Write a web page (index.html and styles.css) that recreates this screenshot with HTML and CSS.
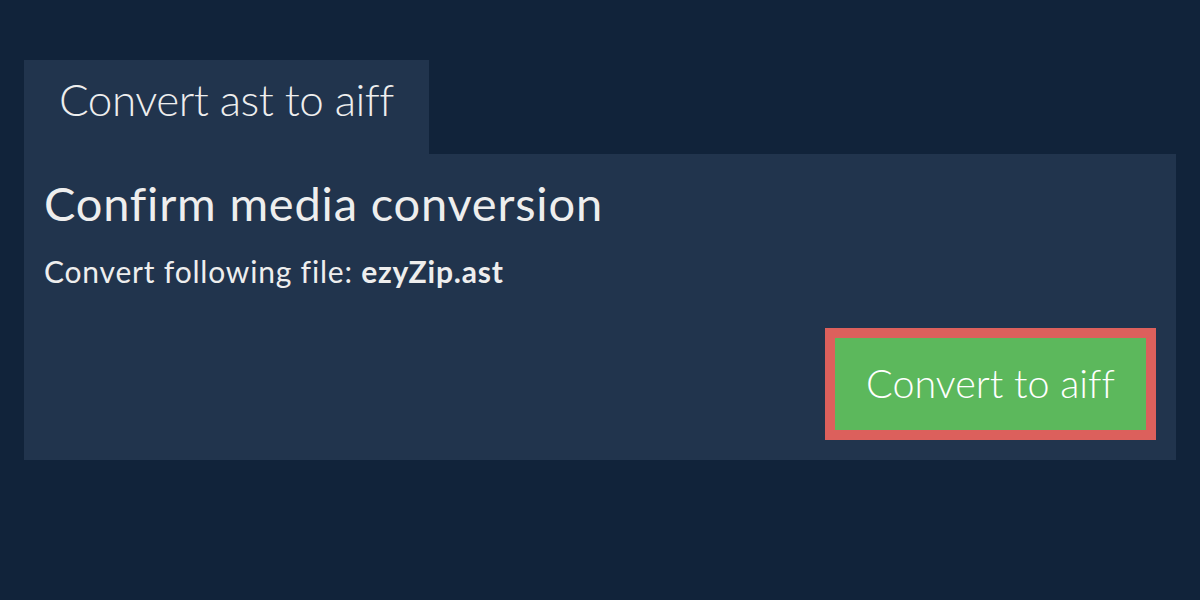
FILE: index.html
```html
<!DOCTYPE html>
<html lang="en">
<head>
<meta charset="utf-8">
<title>Convert ast to aiff</title>
<link rel="stylesheet" href="styles.css">
</head>
<body>
<main class="page">
  <div class="tab"><h1 class="tab-title">Convert ast to aiff</h1></div>
  <section class="panel">
    <h2 class="panel-title">Confirm media conversion</h2>
    <p class="panel-text">Convert following file: <strong>ezyZip.ast</strong></p>
    <div class="actions">
      <button class="convert-btn" type="button">Convert to aiff</button>
    </div>
  </section>
</main>
</body>
</html>
```

FILE: styles.css
```css
html, body {
  margin: 0;
  padding: 0;
}
body {
  background: #11233a;
  color: #eeeeee;
  font-family: Lato, "Open Sans", Arial, sans-serif;
  width: 1200px;
  height: 600px;
  overflow: hidden;
}
.page {
  padding: 60px 24px 0 24px;
  display: flex;
  flex-direction: column;
  align-items: flex-start;
}
.tab {
  background: #21344d;
  padding: 13px 35px 28px 35px;
}
.tab-title {
  margin: 0;
  font-size: 44px;
  font-weight: 300;
  line-height: 1.2;
  letter-spacing: -0.5px;
  color: #eeeeee;
  white-space: nowrap;
  font-variant-ligatures: none;
}
.panel {
  align-self: stretch;
  background: #21344d;
  padding: 21px 20px 20px 20px;
  display: flex;
  flex-direction: column;
}
.panel-title {
  margin: 0;
  font-size: 47px;
  font-weight: 400;
  line-height: 1.2;
  letter-spacing: 0.8px;
  color: #eeeeee;
}
.panel-text {
  margin: 22px 0 0 0;
  font-size: 30px;
  line-height: 1.2;
  letter-spacing: 0.8px;
  color: #eeeeee;
}
.panel-text strong {
  font-weight: 700;
}
.actions {
  margin-top: 39px;
  display: flex;
  justify-content: flex-end;
}
.convert-btn {
  background: #5cb85c;
  border: 10px solid #dc605c;
  color: #ffffff;
  font-family: Lato, "Open Sans", Arial, sans-serif;
  font-size: 39.5px;
  font-weight: 300;
  line-height: 1.2;
  font-variant-ligatures: none;
  padding: 21px 31px 23px 31px;
  margin: 0;
  cursor: pointer;
}
```
